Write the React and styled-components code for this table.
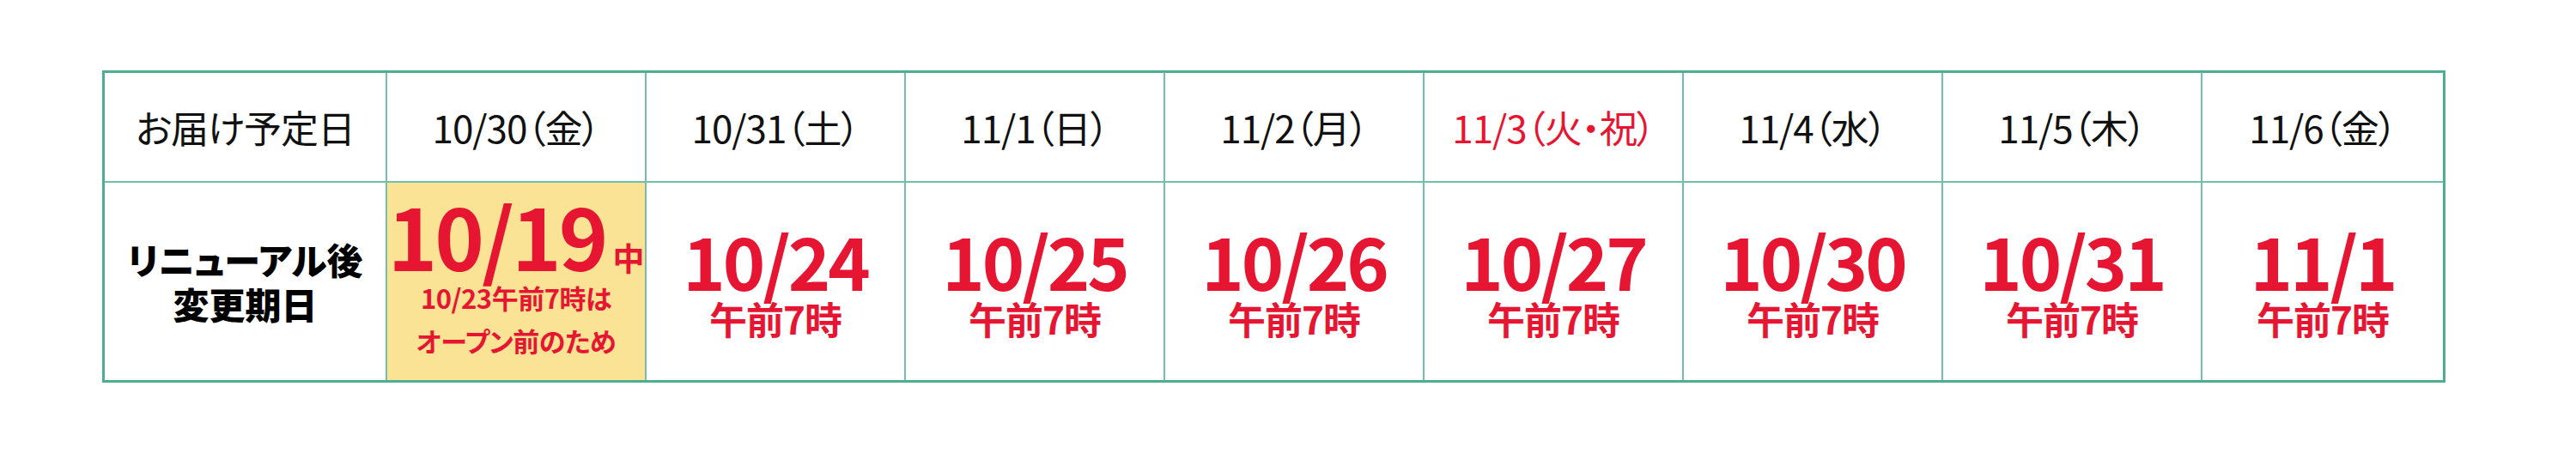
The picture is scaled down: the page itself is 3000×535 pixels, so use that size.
import React from 'react';
import styled, { createGlobalStyle, css } from 'styled-components';

const RED = '#e61632';

const GlobalStyle = createGlobalStyle`
  html, body {
    margin: 0;
    padding: 0;
    background: #fff;
  }
  body {
    font-family: "Noto Sans CJK JP", "Noto Sans", sans-serif;
    font-feature-settings: "palt";
    color: #111;
  }
`;

const Page = styled.div`
  width: 3000px;
  height: 535px;
  padding: 82px 0 0 119px;
  box-sizing: border-box;
`;

const Table = styled.div`
  display: grid;
  grid-template-columns: 327px repeat(7, 300px) 280px;
  grid-template-rows: 126px 230px;
  gap: 2px;
  width: max-content;
  border: 3px solid #4fae8e;
  background: #70c1a7;
`;

const HeadCell = styled.div`
  display: flex;
  align-items: center;
  justify-content: center;
  background: #fff;
  font-size: 44px;
  font-weight: 400;
  letter-spacing: -1px;
  color: ${(p) => (p.$holiday ? RED : '#111')};
`;

const LabelCell = styled.div`
  display: flex;
  align-items: center;
  justify-content: center;
  background: #fff;
  text-align: center;
  font-size: 42px;
  font-weight: 900;
  line-height: 52px;
  color: #000;
`;

const DateCell = styled.div`
  display: flex;
  flex-direction: column;
  align-items: center;
  justify-content: center;
  background: ${(p) => (p.$highlight ? '#fae395' : '#fff')};
  color: ${RED};
  font-weight: 700;
  ${(p) =>
    p.$highlight &&
    css`
      padding-bottom: 6px;
    `}
`;

const BigDate = styled.div`
  font-size: ${(p) => (p.$large ? 98 : 84)}px;
  line-height: 1;
  letter-spacing: -3px;
  margin-top: ${(p) => (p.$large ? -4 : 0)}px;
`;

const Suffix = styled.span`
  font-size: 37px;
  letter-spacing: 0;
  margin-left: 8px;
`;

const Time = styled.div`
  font-size: 44px;
  line-height: 1.1;
  letter-spacing: -1px;
  margin-top: 2px;
`;

const Note = styled.div`
  font-size: 31px;
  line-height: 50px;
  letter-spacing: -0.5px;
  text-align: center;
`;

const days = [
  { head: '10/30（金）', date: '10/19', highlight: true },
  { head: '10/31（土）', date: '10/24' },
  { head: '11/1（日）', date: '10/25' },
  { head: '11/2（月）', date: '10/26' },
  { head: '11/3（火・祝）', date: '10/27', holiday: true },
  { head: '11/4（水）', date: '10/30' },
  { head: '11/5（木）', date: '10/31' },
  { head: '11/6（金）', date: '11/1' },
];

export default function App() {
  return (
    <>
      <GlobalStyle />
      <Page>
        <Table>
          <HeadCell>お届け予定日</HeadCell>
          {days.map((d) => (
            <HeadCell key={d.head} $holiday={d.holiday}>
              {d.head}
            </HeadCell>
          ))}

          <LabelCell>
            リニューアル後
            <br />
            変更期日
          </LabelCell>
          {days.map((d) =>
            d.highlight ? (
              <DateCell key={d.date} $highlight>
                <BigDate $large>
                  {d.date}
                  <Suffix>中</Suffix>
                </BigDate>
                <Note>
                  10/23午前7時は
                  <br />
                  オープン前のため
                </Note>
              </DateCell>
            ) : (
              <DateCell key={d.date}>
                <BigDate>{d.date}</BigDate>
                <Time>午前7時</Time>
              </DateCell>
            )
          )}
        </Table>
      </Page>
    </>
  );
}
